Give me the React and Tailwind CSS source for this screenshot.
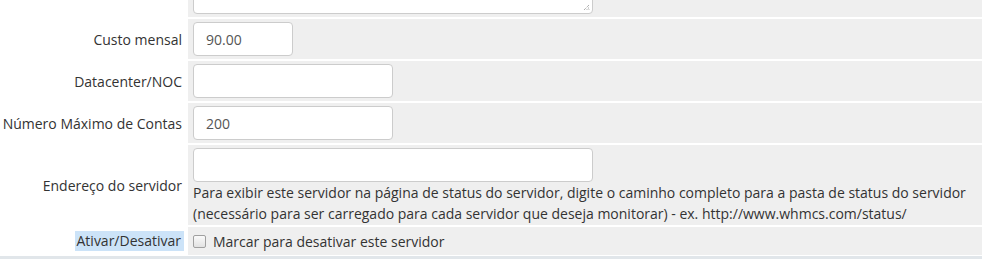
const Row = ({ label, height, highlight, children, className = "" }) => (
  <div className="flex gap-[2px]" style={{ height }}>
    <div
      className={`w-[186px] shrink-0 flex items-center justify-end bg-white ${
        highlight ? "pr-[2px]" : "pr-[4px]"
      }`}
    >
      {highlight ? (
        <span className="bg-[#cce3f8] leading-[20px] pl-[2px] pr-[3px]">{label}</span>
      ) : (
        <span>{label}</span>
      )}
    </div>
    <div className={`flex-1 bg-[#efefef] pl-[5px] ${className}`}>{children}</div>
  </div>
);

const inputCls =
  "h-[34px] border border-[#cccccc] rounded-[4px] bg-white px-[12px] text-[14px] text-[#555] outline-none";

export default function App() {
  return (
    <div className="w-[982px] h-[269px] bg-white overflow-hidden text-[14px] text-[#333] font-['Open_Sans',sans-serif]">
      <div className="flex flex-col gap-[2px]">
        <Row label="" height={17} className="overflow-hidden flex items-end pb-[3px]">
          <div className="relative w-[400px] h-[40px] border border-[#cccccc] rounded-[4px] bg-white">
            <svg className="absolute right-[2px] bottom-[2px]" width="7" height="7" viewBox="0 0 7 7">
              <path d="M6 1L1 6M6 3.5L3.5 6M6 5.5L5.5 6" stroke="#888" strokeWidth="1" strokeDasharray="1 1" />
            </svg>
          </div>
        </Row>
        <Row label="Custo mensal" height={40} className="pt-[3px]">
          <input className={`${inputCls} w-[100px]`} defaultValue="90.00" />
        </Row>
        <Row label="Datacenter/NOC" height={40} className="pt-[3px]">
          <input className={`${inputCls} w-[200px]`} defaultValue="" />
        </Row>
        <Row label="Número Máximo de Contas" height={40} className="pt-[3px]">
          <input className={`${inputCls} w-[200px]`} defaultValue="200" />
        </Row>
        <Row label="Endereço do servidor" height={80} className="pt-[3px]">
          <input className={`${inputCls} w-[400px] block`} defaultValue="" />
          <p className="leading-[21px]">
            Para exibir este servidor na página de status do servidor, digite o caminho completo para a pasta de status do servidor
            <br />
            (necessário para ser carregado para cada servidor que deseja monitorar) - ex. http://www.whmcs.com/status/
          </p>
        </Row>
        <Row label="Ativar/Desativar" height={28} highlight className="flex items-center">
          <label className="flex items-center gap-[7px]">
            <span className="w-[13px] h-[13px] border border-[#a0a0a0] rounded-[2px] bg-gradient-to-b from-[#fafafa] to-[#e2e2e2]" />
            <span>Marcar para desativar este servidor</span>
          </label>
        </Row>
        <div className="h-[3px] bg-[#e1e6ea] mt-[-1px]" />
      </div>
    </div>
  );
}
